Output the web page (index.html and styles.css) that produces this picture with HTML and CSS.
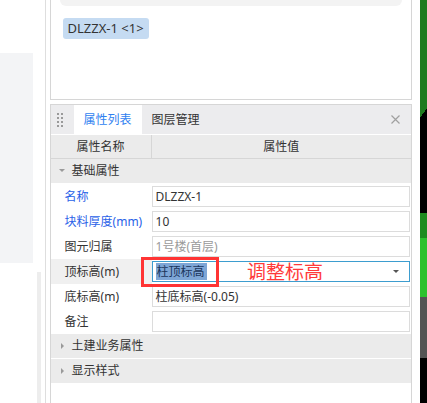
FILE: index.html
```html
<!DOCTYPE html>
<html lang="zh-CN">
<head>
    <meta charset="UTF-8">
    <meta name="viewport" content="width=device-width, initial-scale=1.0">
    <title>属性列表</title>
    <link rel="stylesheet" href="styles.css">
</head>
<body>
    <div class="app">
        <aside class="side">
            <div class="side-block"></div>
            <div class="side-track"></div>
        </aside>

        <main class="main">
            <section class="pick-panel">
                <div class="search-box"></div>
                <span class="tag">DLZZX-1 &lt;1&gt;</span>
            </section>

            <section class="prop-panel">
                <div class="panel-head">
                    <svg class="grip" width="6" height="14" viewBox="0 0 6 14">
                        <rect x="0" y="0" width="2" height="2" fill="#9a9a9a"/>
                        <rect x="4" y="0" width="2" height="2" fill="#9a9a9a"/>
                        <rect x="0" y="4" width="2" height="2" fill="#9a9a9a"/>
                        <rect x="4" y="4" width="2" height="2" fill="#9a9a9a"/>
                        <rect x="0" y="8" width="2" height="2" fill="#9a9a9a"/>
                        <rect x="4" y="8" width="2" height="2" fill="#9a9a9a"/>
                        <rect x="0" y="12" width="2" height="2" fill="#9a9a9a"/>
                        <rect x="4" y="12" width="2" height="2" fill="#9a9a9a"/>
                    </svg>
                    <span class="tab active">属性列表</span>
                    <span class="tab">图层管理</span>
                    <svg class="close" width="9" height="9" viewBox="0 0 9 9">
                        <path d="M0.5 0.5 L8.5 8.5 M8.5 0.5 L0.5 8.5" stroke="#a0a0a0" stroke-width="1.2"/>
                    </svg>
                </div>

                <div class="table-head">
                    <div class="col-name">属性名称</div>
                    <div class="col-value">属性值</div>
                </div>

                <div class="group open">基础属性</div>
                <div class="prop-row">
                    <div class="prop-name blue">名称</div>
                    <div class="field">DLZZX-1</div>
                </div>
                <div class="prop-row">
                    <div class="prop-name blue">块料厚度(mm)</div>
                    <div class="field">10</div>
                </div>
                <div class="prop-row">
                    <div class="prop-name">图元归属</div>
                    <div class="field muted">1号楼(首层)</div>
                </div>
                <div class="prop-row current">
                    <div class="prop-name">顶标高(m)</div>
                    <div class="field editing"><span class="selected">柱顶标高</span><span class="caret"></span></div>
                </div>
                <div class="prop-row">
                    <div class="prop-name">底标高(m)</div>
                    <div class="field">柱底标高(-0.05)</div>
                </div>
                <div class="prop-row">
                    <div class="prop-name">备注</div>
                    <div class="field"></div>
                </div>
                <div class="group">土建业务属性</div>
                <div class="group">显示样式</div>
            </section>
        </main>

        <div class="edge-strip">
            <div class="seg seg-green"></div>
            <div class="seg seg-diag"></div>
            <div class="seg seg-black"></div>
            <div class="seg seg-dark-green"></div>
            <div class="seg seg-bright-green"></div>
            <div class="seg seg-gray"></div>
            <div class="seg seg-rest"></div>
        </div>
    </div>

    <div class="mark-box"></div>
    <div class="mark-label">调整标高</div>
</body>
</html>
```

FILE: styles.css
```css
html, body {
    margin: 0;
    padding: 0;
}
body {
    width: 427px;
    height: 403px;
    overflow: hidden;
    background: #fff;
    font-family: "Noto Sans", "Noto Sans CJK SC", sans-serif;
    font-size: 12px;
    color: #333;
    position: relative;
}
.app {
    display: flex;
    height: 403px;
}

/* left strip */
.side {
    width: 45px;
    border-right: 1px solid #dedede;
    display: flex;
    flex-direction: column;
}
.side-block {
    margin-top: 53px;
    width: 33px;
    height: 210px;
    background: #f3f4f6;
}
.side-track {
    margin: 9px 0 0 37px;
    width: 4px;
    flex: 1;
    background: #ededed;
}

.main {
    width: 366px;
    padding: 0 4px;
    display: flex;
    flex-direction: column;
    gap: 4px;
}

/* picked objects */
.pick-panel {
    height: 100px;
    box-sizing: border-box;
    border: 1px solid #d6d6d6;
    border-top: none;
}
.search-box {
    height: 6px;
    margin: 0 9px;
    background: #f3f3f3;
    border-radius: 0 0 10px 10px;
}
.tag {
    display: inline-block;
    margin: 12px 0 0 12px;
    height: 21px;
    line-height: 21px;
    padding: 0 5px;
    background: #c5dbf2;
    border-radius: 3px;
    font-size: 13px;
    color: #333;
}

/* properties */
.prop-panel {
    flex: 1;
    border: 1px solid #d6d6d6;
    border-bottom: none;
}
.panel-head {
    height: 29px;
    background: #ececee;
    border-bottom: 1px solid #fff;
    display: flex;
    align-items: center;
}
.grip {
    margin: 0 11px 0 6px;
}
.tab {
    height: 29px;
    line-height: 29px;
    padding: 0 10px;
    color: #333;
}
.tab.active {
    background: #fff;
    color: #2f7ff0;
}
.close {
    margin-left: auto;
    margin-right: 11px;
}

.table-head {
    display: flex;
    height: 23px;
    line-height: 23px;
    background: #ebebeb;
    border-bottom: 1px solid #d6d6d6;
}
.col-name {
    width: 100px;
    border-right: 1px solid #d6d6d6;
    text-align: center;
}
.col-value {
    flex: 1;
    text-align: center;
}

.group {
    height: 24px;
    line-height: 24px;
    background: #ebebeb;
    border-bottom: 1px solid #fff;
    padding-left: 21px;
    position: relative;
}
.group::before {
    content: "";
    position: absolute;
    left: 10px;
    top: 9px;
    border-style: solid;
    border-width: 3px 0 3px 3px;
    border-color: transparent transparent transparent #9a9a9a;
}
.group.open::before {
    left: 8px;
    top: 10px;
    border-width: 3px 3px 0 3px;
    border-color: #9a9a9a transparent transparent transparent;
}

.prop-row {
    display: flex;
    height: 25px;
}
.prop-name {
    width: 87px;
    padding-left: 14px;
    line-height: 25px;
    white-space: nowrap;
}
.prop-name.blue {
    color: #2a62e8;
}
.prop-row.current .prop-name {
    background: #f0f0f0;
}
.field {
    flex: 1;
    margin: 2px 1px 2px 0;
    height: 21px;
    box-sizing: border-box;
    border: 1px solid #dcdcdc;
    padding-left: 3px;
    line-height: 19px;
    display: flex;
    align-items: center;
}
.field.muted {
    color: #9a9a9a;
}
.field.editing {
    border-color: #3d9dcf;
}
.selected {
    background: #7ea6d6;
    color: #1b355c;
    padding: 0 2px 0 1px;
    line-height: 17px;
}
.caret {
    margin-left: auto;
    margin-right: 10px;
    border-style: solid;
    border-width: 3px 3px 0 3px;
    border-color: #555 transparent transparent transparent;
}

/* right edge of the window behind */
.edge-strip {
    width: 7px;
    margin-left: 4px;
    display: flex;
    flex-direction: column;
}
.seg-green { height: 108px; background: #1f7b1f; }
.seg-diag { height: 10px; background: linear-gradient(to bottom right, #1f7b1f 50%, #000 50%); }
.seg-black { height: 95px; background: #000; }
.seg-dark-green { height: 25px; background: #1f8b1f; }
.seg-bright-green { height: 59px; background: #2dc12d; }
.seg-gray { height: 61px; background: #545454; }
.seg-rest { flex: 1; background: #000; }

/* annotation */
.mark-box {
    position: absolute;
    left: 141px;
    top: 257px;
    width: 72px;
    height: 24px;
    border: 3px solid #ff3434;
}
.mark-label {
    position: absolute;
    left: 247px;
    top: 259px;
    font-family: "Noto Sans CJK SC", sans-serif;
    font-size: 19px;
    line-height: 24px;
    color: #ff3a3a;
}
```
